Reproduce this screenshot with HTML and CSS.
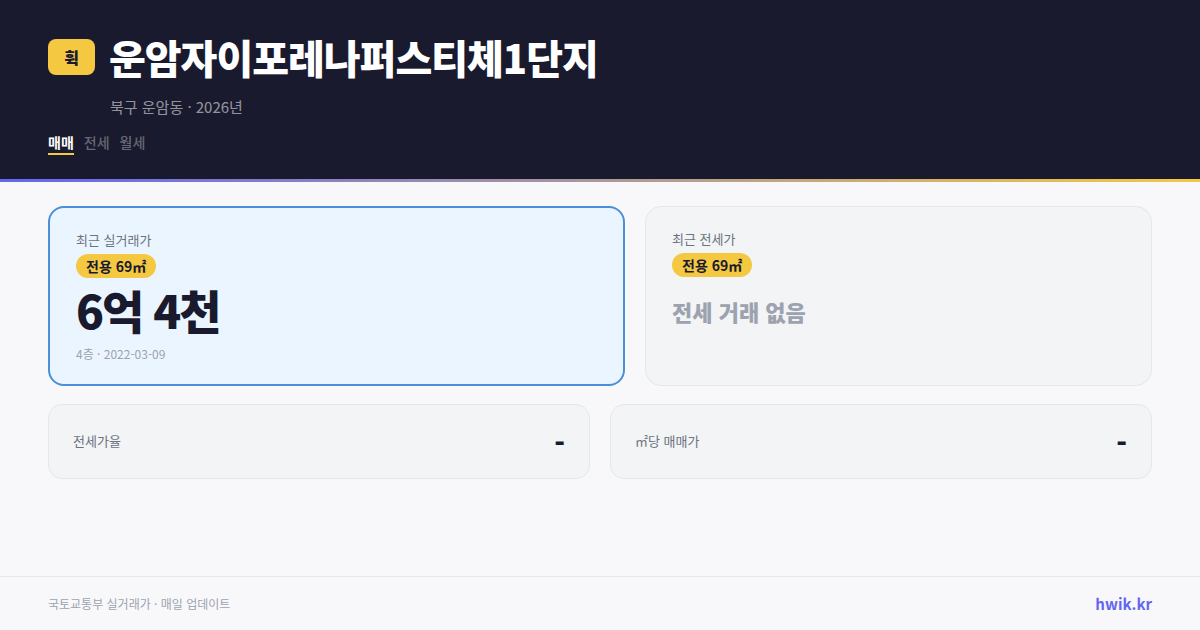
FILE: index.html
```html
<!DOCTYPE html>
<html lang="ko">
<head>
<meta charset="utf-8">
<title>운암자이포레나퍼스티체1단지</title>
<link rel="stylesheet" href="styles.css">
</head>
<body>
<div class="page">
  <header class="hero">
    <div class="title-row">
      <span class="logo">휙</span>
      <h1 class="title">운암자이포레나퍼스티체1단지</h1>
    </div>
    <p class="subtitle">북구 운암동 · 2026년</p>
    <nav class="tabs">
      <span class="tab tab-active">매매</span>
      <span class="tab">전세</span>
      <span class="tab">월세</span>
    </nav>
  </header>
  <div class="accent"></div>
  <main class="content">
    <section class="cards">
      <article class="card card-primary">
        <div class="card-label">최근 실거래가</div>
        <span class="pill">전용 69㎡</span>
        <div class="price">6억 4천</div>
        <div class="meta">4층 · 2022-03-09</div>
      </article>
      <article class="card card-muted">
        <div class="card-label">최근 전세가</div>
        <span class="pill">전용 69㎡</span>
        <div class="empty">전세 거래 없음</div>
      </article>
    </section>
    <section class="stats">
      <div class="stat"><span class="stat-label">전세가율</span><span class="stat-value">-</span></div>
      <div class="stat"><span class="stat-label">㎡당 매매가</span><span class="stat-value">-</span></div>
    </section>
  </main>
  <footer class="footer">
    <span class="source">국토교통부 실거래가 · 매일 업데이트</span>
    <span class="brand">hwik.kr</span>
  </footer>
</div>
</body>
</html>
```
FILE: styles.css
```css
* { box-sizing: border-box; margin: 0; padding: 0; }
html, body { width: 1200px; height: 630px; overflow: hidden; }
body { font-family: "Noto Sans CJK KR", "Noto Sans", sans-serif; background: #f8f8fb; color: #1a1a2e; }
.page { width: 1200px; height: 630px; display: flex; flex-direction: column; }
.hero { height: 179px; background: #1a1a2e; padding: 30px 48px 0; }
.title-row { display: flex; align-items: center; gap: 14px; height: 54px; }
.logo { width: 47px; height: 36px; border-radius: 8px; background: #f5c842; color: #1a1a2e; font-size: 16px; font-weight: 900; display: flex; align-items: center; justify-content: center; }
.title { font-size: 40px; font-weight: 900; color: #fff; letter-spacing: -1px; line-height: 54px; }
.subtitle { margin: 12px 0 0 62px; font-size: 15px; line-height: 22px; color: rgba(255,255,255,0.55); }
.tabs { display: flex; gap: 10px; margin-top: 14px; }
.tab { font-size: 14px; font-weight: 500; line-height: 20px; padding-bottom: 1px; color: rgba(255,255,255,0.35); border-bottom: 2px solid transparent; }
.tab-active { color: #fff; font-weight: 700; border-bottom-color: #f5c842; }
.accent { height: 3px; background: linear-gradient(90deg, #6366f1, #f5c842); }
.content { flex: 1; padding: 24px 48px 0; display: flex; flex-direction: column; gap: 18px; }
.cards { display: flex; gap: 20px; height: 180px; }
.card { border-radius: 16px; display: flex; flex-direction: column; align-items: flex-start; }
.card-primary { width: 577px; background: #ebf5ff; border: 2px solid #4a90d9; padding: 22px 26px; }
.card-muted { flex: 1; background: #f3f4f6; border: 1px solid #e5e7eb; padding: 22px 26px; }
.card-label { font-size: 13px; line-height: 19px; color: #6b7280; }
.pill { margin-top: 5px; padding: 0 10px; height: 24px; line-height: 24px; border-radius: 12px; background: #f5c842; color: #1a1a2e; font-size: 14px; font-weight: 700; }
.price { font-size: 46px; line-height: 62px; font-weight: 900; letter-spacing: -2px; color: #1a1a2e; }
.meta { margin-top: 5px; font-size: 12px; line-height: 18px; color: #9ca3af; }
.empty { margin-top: 18px; font-size: 22px; line-height: 32px; font-weight: 900; color: #9ca3af; }
.stats { display: flex; gap: 20px; height: 75px; }
.stat { flex: 1; background: #f3f4f6; border: 1px solid #e5e7eb; border-radius: 14px; padding: 0 24px; display: flex; align-items: center; justify-content: space-between; }
.stat-label { font-size: 13px; margin-bottom: 2px; color: #6b7280; }
.stat-value { font-size: 28px; font-weight: 900; color: #1a1a2e; }
.footer { height: 54px; border-top: 1px solid #e5e7eb; padding: 0 48px; display: flex; align-items: center; justify-content: space-between; }
.source { font-size: 12px; color: #9ca3af; }
.brand { font-size: 15px; font-weight: 700; color: #6366f1; }
```
